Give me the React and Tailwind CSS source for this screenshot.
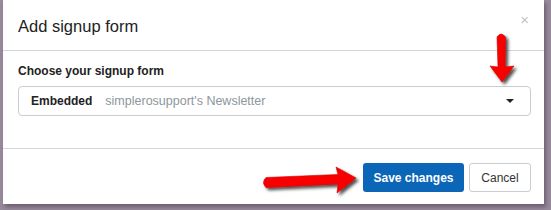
export default function App() {
  return (
    <div
      className="relative h-[210px] w-[551px] overflow-hidden bg-[#978a9b] pl-[3px]"
      style={{ fontFamily: '"Liberation Sans", Arial, sans-serif' }}
    >
      <div className="flex h-[204px] w-[541px] flex-col bg-white shadow-[2px_3px_4px_rgba(60,40,70,0.45)]">
        <div className="flex h-[51px] shrink-0 items-start justify-between border-b border-[#cfd8dc] pl-[15px] pr-[15px]">
          <h4 className="mt-[16px] text-[16.5px] leading-[20px] text-[#222]">Add signup form</h4>
          <span className="mt-[11px] text-[15px] leading-[18px] text-[#c4c4c4]">×</span>
        </div>

        <div className="flex-1 border-b border-[#cfd8dc] pl-[15px] pr-[13px] pt-[12px]">
          <label className="block text-[12px] font-bold leading-[16px] text-[#222]">
            Choose your signup form
          </label>
          <div className="mt-[7px] flex h-[30px] items-center rounded-[4px] border border-[#c6ced3] pl-[12px] pr-[16px]">
            <span className="text-[12px] font-bold text-[#222]">Embedded</span>
            <span className="ml-[13px] text-[12.5px] text-[#8d969c]">simplerosupport's Newsletter</span>
            <span className="ml-auto h-0 w-0 border-x-[4px] border-t-[4px] border-x-transparent border-t-[#222]" />
          </div>
        </div>

        <div className="flex h-[55px] shrink-0 items-start justify-end gap-[5px] pr-[13px] pt-[14px]">
          <button className="h-[29px] w-[101px] rounded-[3px] bg-[#0b66b8] text-[12px] font-bold text-white">
            Save changes
          </button>
          <button className="h-[29px] w-[62px] rounded-[3px] border border-[#c6ced3] bg-white text-[12px] text-[#333]">
            Cancel
          </button>
        </div>
      </div>

      <svg className="pointer-events-none absolute left-0 top-0" width="551" height="210">
        <defs>
          <filter id="sh" x="-50%" y="-50%" width="200%" height="200%">
            <feDropShadow dx="2.5" dy="2.5" stdDeviation="1.6" floodColor="#000" floodOpacity="0.7" />
          </filter>
        </defs>
        <g filter="url(#sh)" fill="#f80000" stroke="#d40000" strokeWidth="0.6">
          <path d="M497 37 Q501 31 505.5 37 L505 67 L514 66 L502 82 L490 66 L498 67 Z" />
          <path d="M266 177.5 L338 174.5 L336 167 L356 178 L337 193 L338 184 L266 187.5 Q261 182.5 266 177.5 Z" />
        </g>
      </svg>
    </div>
  );
}
